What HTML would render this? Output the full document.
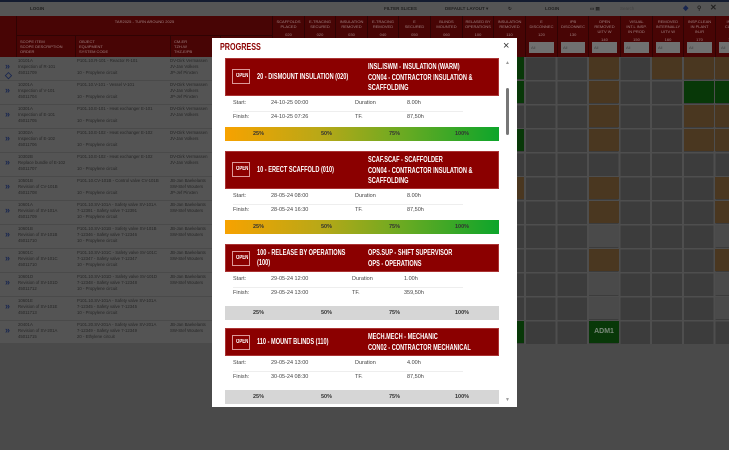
<!DOCTYPE html><html><head><meta charset="utf-8"><style>
*{box-sizing:border-box;margin:0;padding:0}
body{width:729px;height:450px;overflow:hidden;background:#4a4a4a;font-family:"Liberation Sans",sans-serif;position:relative}
.a{position:absolute}
.top{left:0;top:0;width:729px;height:16px;background:#555;border-top:2px solid #141c30;font-size:4.5px;color:#222;font-weight:bold}
.top span{position:absolute;top:4px}
.hdr{left:0;top:16px;width:729px;height:41px;background:#480505}
.hc{position:absolute;top:0;height:41px;border-left:1px solid #300303;color:#a08080;font-size:4px;text-align:center;line-height:5px;padding-top:3px}
.hc i{display:block;font-style:normal;margin-top:3px}
.hc b{position:absolute;left:3px;right:3px;top:26px;height:11px;background:#707070;font-weight:normal;text-align:left;padding:3px 2px;color:#444}
.rows{left:0;top:57px;width:272px;height:287px;background:#545454}
.r{position:absolute;left:0;width:272px;height:24px;border-bottom:1px solid #4a4a4a;font-size:4.3px;color:#262626;line-height:6px}
.r div{position:absolute;top:1px}
.ic{left:5px;top:5px!important;color:#182650;font-size:9px;font-weight:bold;line-height:9px}
.grid{left:272px;top:57px;width:457px;height:287px;background:#4e4e4e}
.c{position:absolute;width:30px;height:22px;background:#3c3c3c;border:1px solid #303030}
.t{background:#4a3720;border-color:#4a3720}.g{background:#083808;border-color:#083808}.l{background:#4a4a4a;border-color:#4a4a4a}
.modal{left:212px;top:38px;width:305px;height:369px;background:#fff}
.cond{font-weight:bold}
.sx{display:inline-block;transform:scaleX(.72);transform-origin:0 0;white-space:nowrap}
.card{position:absolute;left:13px;width:274px}
.ch{background:#8b0000;color:#fff;position:relative;border:1px solid #a33}
.open{position:absolute;left:6px;width:18px;height:15px;border:1px solid #d99;font-size:6px;line-height:13px;padding-left:3px}
.tl{position:absolute;left:31px;font-size:7.8px;line-height:10px}
.tr{position:absolute;left:142px;font-size:7.8px;line-height:10.5px}
.det{position:relative;font-size:5.5px;color:#444;height:31px}
.det div{position:absolute}
.bar{height:14px;font-size:5.5px;font-weight:bold;color:#333;position:relative}
.bar span{position:absolute;top:4px}
.grad{background:linear-gradient(90deg,#f7a200,#b8a817 35%,#6aaa22 65%,#0da52b)}
.gray{background:#d6d6d6}
</style></head><body>
<div class="a top"><span style="left:30px">LOGIN</span><span style="left:384px">FILTER SLICES</span><span style="left:445px">DEFAULT LAYOUT ▾</span><span style="left:508px">↻</span><span style="left:545px">LOGIN</span><span style="left:590px">▭ ▤</span><span style="left:620px;font-weight:normal;color:#444">Search</span><span style="left:683px;color:#182650;font-size:7px;top:2px">◆</span><span style="left:697px;font-size:6px;top:3px">⚲</span><span style="left:710px;font-size:8px;top:1px">✕</span></div>
<div class="a hdr">
<div class="hc" style="left:16px;width:256px;height:20px;border-bottom:1px solid #300303">TAR2025 - TURN AROUND 2025</div>
<div class="hc" style="left:16px;width:59px;top:20px;height:21px;text-align:left;padding-left:3px">SCOPE ITEM<br>SCOPE DESCRIPTION<br>ORDER</div>
<div class="hc" style="left:75px;width:95px;top:20px;height:21px;text-align:left;padding-left:3px">OBJECT<br>EQUIPMENT<br>SYSTEM CODE</div>
<div class="hc" style="left:170px;width:50px;top:20px;height:21px;text-align:left;padding-left:3px">CM-ER<br>TZH-W<br>THZ-E/PB</div>
<div class="hc" style="left:220px;width:52px;top:20px;height:21px;text-align:left;padding-left:3px">MOC</div>
<div class="hc" style="left:272px;width:32px">SCAFFOLDS<br>PLACED<i>020</i></div>
<div class="hc" style="left:304px;width:31px">E-TRACING<br>SECURED<i>020</i></div>
<div class="hc" style="left:335px;width:32px">INSULATION<br>REMOVED<i>030</i></div>
<div class="hc" style="left:367px;width:31px">E-TRACING<br>REMOVED<i>040</i></div>
<div class="hc" style="left:398px;width:32px">E<br>SECURED<i>050</i></div>
<div class="hc" style="left:430px;width:32px">BLINDS<br>MOUNTED<i>060</i></div>
<div class="hc" style="left:462px;width:31px">RELASED BY<br>OPERATIONS<i>100</i></div>
<div class="hc" style="left:493px;width:32px">INSULATION<br>REMOVED<i>110</i></div>
<div class="hc" style="left:525px;width:32px">E<br>DISCONNEC<i>120</i><b>All</b></div>
<div class="hc" style="left:557px;width:31px">IPB<br>DISCONNEC<i>130</i><b>All</b></div>
<div class="hc" style="left:588px;width:32px">OPEN<br>REMOVED<br>UITV W<i>140</i><b>All</b></div>
<div class="hc" style="left:620px;width:32px">VISUAL<br>INT.L INSP.<br>IN PROD<i>150</i><b>All</b></div>
<div class="hc" style="left:652px;width:31px">REMOVED<br>INTERNALLY<br>UITV W<i>160</i><b>All</b></div>
<div class="hc" style="left:683px;width:32px">INSP.CLEAN<br>IN PLANT<br>IN-IR<i>170</i><b>All</b></div>
<div class="hc" style="left:715px;width:32px">INSP.<br>CLEAN<br>IN<i>180</i><b>All</b></div>
</div>
<div class="a rows">
<div class="r" style="top:0"><div class="ic">»<br>◇</div><div style="left:18px">10101A<br>Inspection of R-101<br>45011709</div><div style="left:77px">P101.10.R-101 - Reactor R-101<br><br>10 - Propylene circuit</div><div style="left:170px">DV-Dirk Vermassen<br>JV-Jan Volkers<br>JP-Jef Pinxten</div></div>
<div class="r" style="top:24px"><div class="ic">»</div><div style="left:18px">10201A<br>Inspection of V-101<br>45011704</div><div style="left:77px">P101.10.V-101 - Vessel V-101<br><br>10 - Propylene circuit</div><div style="left:170px">DV-Dirk Vermassen<br>JV-Jan Volkers<br>JP-Jef Pinxten</div></div>
<div class="r" style="top:48px"><div class="ic">»</div><div style="left:18px">10301A<br>Inspection of E-101<br>45011705</div><div style="left:77px">P101.10.E-101 - Heat exchanger E-101<br><br>10 - Propylene circuit</div><div style="left:170px">DV-Dirk Vermassen<br>JV-Jan Volkers</div></div>
<div class="r" style="top:72px"><div class="ic">»</div><div style="left:18px">10302A<br>Inspection of E-102<br>45011706</div><div style="left:77px">P101.10.E-102 - Heat exchanger E-102<br><br>10 - Propylene circuit</div><div style="left:170px">DV-Dirk Vermassen<br>JV-Jan Volkers</div></div>
<div class="r" style="top:96px"><div class="ic">»</div><div style="left:18px">10302B<br>Replace bundle of E-102<br>45011707</div><div style="left:77px">P101.10.E-102 - Heat exchanger E-102<br><br>10 - Propylene circuit</div><div style="left:170px">DV-Dirk Vermassen<br>JV-Jan Volkers</div></div>
<div class="r" style="top:120px"><div class="ic">»</div><div style="left:18px">10501B<br>Revision of CV-101B<br>45011708</div><div style="left:77px">P101.10.CV-101B - Control valve CV-101B<br><br>10 - Propylene circuit</div><div style="left:170px">JB-Jan Baekelants<br>SW-Stef Wouters<br>JP-Jef Pinxten</div></div>
<div class="r" style="top:144px"><div class="ic">»</div><div style="left:18px">10601A<br>Revision of SV-101A<br>45011709</div><div style="left:77px">P101.10.SV-101A - Safety valve SV-101A<br>7-12391 - Safety valve 7-12391<br>10 - Propylene circuit</div><div style="left:170px">JB-Jan Baekelants<br>SW-Stef Wouters</div></div>
<div class="r" style="top:168px"><div class="ic">»</div><div style="left:18px">10601B<br>Revision of SV-101B<br>45011710</div><div style="left:77px">P101.10.SV-101B - Safety valve SV-101B<br>7-12346 - Safety valve 7-12346<br>10 - Propylene circuit</div><div style="left:170px">JB-Jan Baekelants<br>SW-Stef Wouters</div></div>
<div class="r" style="top:192px"><div class="ic">»</div><div style="left:18px">10601C<br>Revision of SV-101C<br>45011710</div><div style="left:77px">P101.10.SV-101C - Safety valve SV-101C<br>7-12347 - Safety valve 7-12347<br>10 - Propylene circuit</div><div style="left:170px">JB-Jan Baekelants<br>SW-Stef Wouters</div></div>
<div class="r" style="top:216px"><div class="ic">»</div><div style="left:18px">10601D<br>Revision of SV-101D<br>45011712</div><div style="left:77px">P101.10.SV-101D - Safety valve SV-101D<br>7-12348 - Safety valve 7-12348<br>10 - Propylene circuit</div><div style="left:170px">JB-Jan Baekelants<br>SW-Stef Wouters</div></div>
<div class="r" style="top:240px"><div class="ic">»</div><div style="left:18px">10601E<br>Revision of SV-101E<br>45011713</div><div style="left:77px">P101.10.SV-101A - Safety valve SV-101A<br>7-12345 - Safety valve 7-12345<br>10 - Propylene circuit</div></div>
<div class="r" style="top:264px;height:23px"><div class="ic">»</div><div style="left:18px">20401A<br>Revision of SV-201A<br>45011715</div><div style="left:77px">P101.20.SV-201A - Safety valve SV-201A<br>7-12349 - Safety valve 7-12349<br>20 - Ethylene circuit</div><div style="left:170px">JB-Jan Baekelants<br>SW-Stef Wouters</div></div>
</div>
<div class="a grid">
<div style="position:absolute;inset:0;background-image:repeating-linear-gradient(90deg,#4e4e4e 0 1px,#3c3c3c 1px 30.6px,#4e4e4e 30.6px 31.6px)"></div>
<div style="position:absolute;inset:0;background-image:repeating-linear-gradient(0deg,transparent 0 22.5px,#4e4e4e 22.5px 24px)"></div>
<div class="c g" style="left:222px;top:0"></div><div class="c g" style="left:222px;top:24px"></div>
<div class="c t" style="left:317px;top:0"></div><div class="c t" style="left:380px;top:0"></div><div class="c t" style="left:412px;top:0"></div><div class="c t" style="left:443px;top:0"></div>
<div class="c t" style="left:317px;top:24px"></div><div class="c g" style="left:412px;top:24px"></div><div class="c g" style="left:443px;top:24px"></div>
<div class="c t" style="left:317px;top:48px"></div><div class="c t" style="left:412px;top:48px"></div><div class="c t" style="left:443px;top:48px"></div>
<div class="c t" style="left:317px;top:72px"></div><div class="c t" style="left:412px;top:72px"></div><div class="c t" style="left:443px;top:72px"></div><div class="c g" style="left:222px;top:72px"></div>
<div class="c t" style="left:222px;top:120px"></div><div class="c t" style="left:317px;top:120px"></div><div class="c t" style="left:443px;top:120px"></div>
<div class="c t" style="left:317px;top:144px"></div><div class="c t" style="left:443px;top:144px"></div>
<div class="c l" style="left:317px;top:168px"></div><div class="c l" style="left:443px;top:168px"></div>
<div class="c t" style="left:317px;top:192px"></div><div class="c t" style="left:443px;top:192px"></div>
<div class="c l" style="left:317px;top:216px"></div><div class="c l" style="left:443px;top:216px"></div>
<div class="c l" style="left:317px;top:240px"></div><div class="c l" style="left:443px;top:240px"></div>
<div class="c g" style="left:222px;top:264px"></div><div class="c g" style="left:317px;top:264px;color:#7a8a7a;font-size:7px;font-weight:bold;text-align:center;line-height:20px">ADM1</div>
</div>
<div class="a modal">
<div class="a cond" style="left:8px;top:4px;font-size:10px;color:#8b0000"><span class="sx">PROGRESS</span></div>
<div class="a" style="left:291px;top:2px;font-size:11px;color:#333">×</div>
<div class="a" style="left:293px;top:22px;font-size:5px;color:#999">▲</div>
<div class="a" style="left:294px;top:50px;width:3px;height:47px;background:#777;border-radius:2px"></div>
<div class="a" style="left:293px;top:359px;font-size:5px;color:#999">▼</div>
<div style="position:absolute;left:0;top:20px;width:305px;height:349px;overflow:hidden">
<div class="card" style="top:0">
<div class="ch cond" style="height:38px"><div class="open" style="top:10px"><span class="sx">OPEN</span></div><div class="tl" style="top:13px"><span class="sx">20 - DISMOUNT INSULATION (020)</span></div><div class="tr" style="top:3px"><span class="sx">INSL.ISWM - INSULATION (WARM)<br>CON04 - CONTRACTOR INSULATION &amp;<br>SCAFFOLDING</span></div></div>
<div class="det"><div style="left:8px;top:4px">Start:</div><div style="left:46px;top:4px">24-10-25 00:00</div><div style="left:130px;top:4px">Duration</div><div style="left:182px;top:4px">8.00h</div><div style="left:8px;top:15px;width:230px;border-top:1px solid #eee;height:1px"></div><div style="left:8px;top:18px">Finish:</div><div style="left:46px;top:18px">24-10-25 07:26</div><div style="left:130px;top:18px">TF.</div><div style="left:182px;top:18px">87,50h</div></div>
<div class="bar grad"><span style="left:28px">25%</span><span style="left:96px">50%</span><span style="left:164px">75%</span><span style="left:230px">100%</span></div>
</div>
<div class="card" style="top:93px">
<div class="ch cond" style="height:38px"><div class="open" style="top:10px"><span class="sx">OPEN</span></div><div class="tl" style="top:13px"><span class="sx">10 - ERECT SCAFFOLD (010)</span></div><div class="tr" style="top:3px"><span class="sx">SCAF.SCAF - SCAFFOLDER<br>CON04 - CONTRACTOR INSULATION &amp;<br>SCAFFOLDING</span></div></div>
<div class="det"><div style="left:8px;top:4px">Start:</div><div style="left:46px;top:4px">28-05-24 08:00</div><div style="left:130px;top:4px">Duration</div><div style="left:182px;top:4px">8.00h</div><div style="left:8px;top:15px;width:230px;border-top:1px solid #eee;height:1px"></div><div style="left:8px;top:18px">Finish:</div><div style="left:46px;top:18px">28-05-24 16:30</div><div style="left:130px;top:18px">TF.</div><div style="left:182px;top:18px">87,50h</div></div>
<div class="bar grad"><span style="left:28px">25%</span><span style="left:96px">50%</span><span style="left:164px">75%</span><span style="left:230px">100%</span></div>
</div>
<div class="card" style="top:186px">
<div class="ch cond" style="height:28px"><div class="open" style="top:6px"><span class="sx">OPEN</span></div><div class="tl" style="top:3px"><span class="sx">100 - RELEASE BY OPERATIONS<br>(100)</span></div><div class="tr" style="top:3px"><span class="sx">OPS.SUP - SHIFT SUPERVISOR<br>OPS - OPERATIONS</span></div></div>
<div class="det"><div style="left:8px;top:4px">Start:</div><div style="left:46px;top:4px">29-05-24 12:00</div><div style="left:127px;top:4px">Duration</div><div style="left:179px;top:4px">1.00h</div><div style="left:8px;top:15px;width:230px;border-top:1px solid #eee;height:1px"></div><div style="left:8px;top:18px">Finish:</div><div style="left:46px;top:18px">29-05-24 13:00</div><div style="left:127px;top:18px">TF.</div><div style="left:179px;top:18px">359,50h</div></div>
<div class="bar gray" style="margin-top:3px"><span style="left:28px">25%</span><span style="left:96px">50%</span><span style="left:164px">75%</span><span style="left:230px">100%</span></div>
</div>
<div class="card" style="top:270px">
<div class="ch cond" style="height:28px"><div class="open" style="top:6px"><span class="sx">OPEN</span></div><div class="tl" style="top:8px"><span class="sx">110 - MOUNT BLINDS (110)</span></div><div class="tr" style="top:3px"><span class="sx">MECH.MECH - MECHANIC<br>CON02 - CONTRACTOR MECHANICAL</span></div></div>
<div class="det"><div style="left:8px;top:4px">Start:</div><div style="left:46px;top:4px">29-05-24 13:00</div><div style="left:130px;top:4px">Duration</div><div style="left:182px;top:4px">4.00h</div><div style="left:8px;top:15px;width:230px;border-top:1px solid #eee;height:1px"></div><div style="left:8px;top:18px">Finish:</div><div style="left:46px;top:18px">30-05-24 08:30</div><div style="left:130px;top:18px">TF.</div><div style="left:182px;top:18px">87,50h</div></div>
<div class="bar gray" style="margin-top:3px"><span style="left:28px">25%</span><span style="left:96px">50%</span><span style="left:164px">75%</span><span style="left:230px">100%</span></div>
</div>
</div>
</div>
</body></html>
